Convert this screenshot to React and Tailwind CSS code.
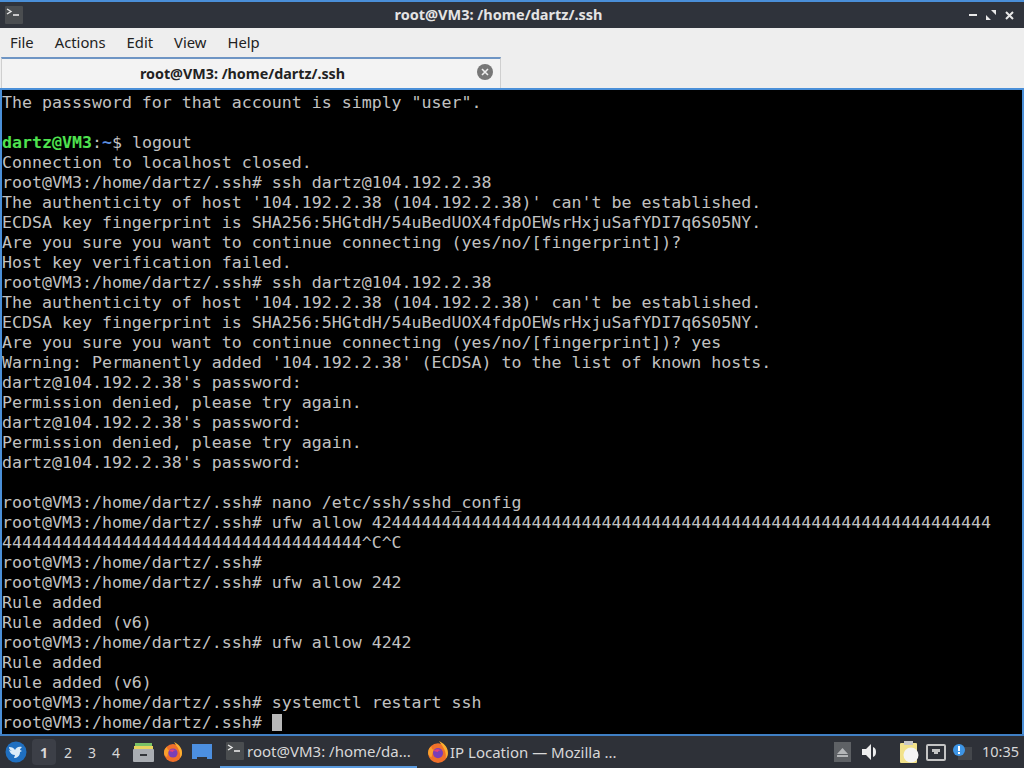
const lines = [
  'The passsword for that account is simply "user".',
  '',
  'PROMPT',
  'Connection to localhost closed.',
  'root@VM3:/home/dartz/.ssh# ssh dartz@104.192.2.38',
  "The authenticity of host '104.192.2.38 (104.192.2.38)' can't be established.",
  'ECDSA key fingerprint is SHA256:5HGtdH/54uBedUOX4fdpOEWsrHxjuSafYDI7q6S05NY.',
  'Are you sure you want to continue connecting (yes/no/[fingerprint])?',
  'Host key verification failed.',
  'root@VM3:/home/dartz/.ssh# ssh dartz@104.192.2.38',
  "The authenticity of host '104.192.2.38 (104.192.2.38)' can't be established.",
  'ECDSA key fingerprint is SHA256:5HGtdH/54uBedUOX4fdpOEWsrHxjuSafYDI7q6S05NY.',
  'Are you sure you want to continue connecting (yes/no/[fingerprint])? yes',
  "Warning: Permanently added '104.192.2.38' (ECDSA) to the list of known hosts.",
  "dartz@104.192.2.38's password:",
  'Permission denied, please try again.',
  "dartz@104.192.2.38's password:",
  'Permission denied, please try again.',
  "dartz@104.192.2.38's password:",
  '',
  'root@VM3:/home/dartz/.ssh# nano /etc/ssh/sshd_config',
  'root@VM3:/home/dartz/.ssh# ufw allow 42444444444444444444444444444444444444444444444444444444444444',
  '444444444444444444444444444444444444^C^C',
  'root@VM3:/home/dartz/.ssh#',
  'root@VM3:/home/dartz/.ssh# ufw allow 242',
  'Rule added',
  'Rule added (v6)',
  'root@VM3:/home/dartz/.ssh# ufw allow 4242',
  'Rule added',
  'Rule added (v6)',
  'root@VM3:/home/dartz/.ssh# systemctl restart ssh',
]

function TermIcon({ size = 18 }) {
  return (
    <svg width={size} height={size} viewBox="0 0 18 18">
      <rect width="18" height="18" rx="1" fill="#4a4d50" />
      <path d="M2 3l4 2.5L2 8" fill="none" stroke="#e8e8e8" strokeWidth="1.4" />
      <path d="M8 9h6" stroke="#e8e8e8" strokeWidth="1.6" />
    </svg>
  )
}

function Firefox({ size = 20 }) {
  return (
    <svg width={size} height={size} viewBox="0 0 20 20">
      <circle cx="10" cy="11" r="9" fill="#f0702a" />
      <path d="M11 0c4 2 8 5 8 11 0 2-1 4-2 5 1-6-2-10-6-16z" fill="#fbb030" />
      <path d="M1 11c0-3 1-5 3-6 0 2 1 3 2 3l-2 7c-2-1-3-2-3-4z" fill="#f9a02c" />
      <circle cx="10" cy="11" r="4.6" fill="#7a3fb8" />
      <path d="M6 9c2-2 5-2 7 0-2-1-3 0-3 1l-4-1z" fill="#e4417a" />
    </svg>
  )
}

function Logo() {
  return (
    <svg width="22" height="22" viewBox="0 0 22 22">
      <circle cx="11" cy="11" r="10.5" fill="#1f6fc0" />
      <path d="M4 6c3 0 5 1 6 3 1-2 3-4 7-3-1 1-2 2-2 3l2 1-2 1c0 4-3 6-6 6l1-3c-3 0-5-2-6-5l3 1C5 9 4 8 4 6z" fill="#dcecf8" />
    </svg>
  )
}

export default function App() {
  return (
    <div className="w-[1024px] h-[768px] overflow-hidden flex flex-col bg-[#2f343f] font-['Noto_Sans',sans-serif]">
      <div className="h-[2px] bg-[#4a8fd8]" />
      <div className="h-[26px] shrink-0 flex items-center px-[5px] bg-[#2f333b]">
        <TermIcon />
        <div className="flex-1 text-center font-bold text-[#e4e4e4] text-[14.5px] leading-none pl-[5px] pb-[2px]">root@VM3: /home/dartz/.ssh</div>
        <div className="flex items-center gap-[9px] mr-[5px]">
          <svg width="8" height="8" viewBox="0 0 8 8"><rect y="3" width="8" height="2" fill="#e8e8e8" /></svg>
          <svg width="10" height="10" viewBox="0 0 10 10"><path d="M5 0h5v5zM0 5l5 5H0z" fill="#e8e8e8" /></svg>
          <svg width="9" height="9" viewBox="0 0 9 9"><path d="M1 1l7 7M8 1L1 8" stroke="#e8e8e8" strokeWidth="2" /></svg>
        </div>
      </div>
      <div className="h-[30px] shrink-0 bg-[#eeeeee] flex items-center pl-[10px] gap-[21px] text-[14.8px] text-[#222] pb-[2px]">
        <span>File</span><span>Actions</span><span>Edit</span><span>View</span><span>Help</span>
      </div>
      <div className="h-[32px] shrink-0 bg-[#eeeeee] flex items-end border-b-2 border-[#4a8fd8]">
        <div className="ml-[1px] w-[500px] h-[31px] bg-[#f3f3f3] border-t-2 border-x border-[#6e95c4] border-x-[#cfcfcf] flex items-center relative">
          <div className="flex-1 text-center font-bold text-[14.3px] text-[#222] pr-[17px]">root@VM3: /home/dartz/.ssh</div>
          <svg className="absolute right-[7px] top-[5px]" width="16" height="16" viewBox="0 0 16 16">
            <circle cx="8" cy="8" r="8" fill="#777" />
            <path d="M5 5l6 6M11 5l-6 6" stroke="#eee" strokeWidth="1.6" />
          </svg>
        </div>
      </div>
      <div className="flex-1 bg-black border-x-2 border-[#4a8fd8] text-[#c2c2c2] font-['DejaVu_Sans_Mono',monospace] text-[16.6px] leading-[20px] whitespace-pre pt-[3px] overflow-hidden">
        {lines.map((l, i) => (
          <div key={i} className="h-[20px]">
            {l === 'PROMPT' ? (
              <><span className="font-bold text-[#4fe34f]">dartz@VM3</span>:<span className="font-bold text-[#5c8fe0]">~</span>$ logout</>
            ) : l}
          </div>
        ))}
        <div className="h-[20px] flex">
          <span>root@VM3:/home/dartz/.ssh# </span>
          <span className="w-[10px] h-[17px] mt-[1px] bg-[#b8b8b8]" />
        </div>
      </div>
      <div className="h-[2px] shrink-0 bg-[#3f7fc4]" />
      <div className="h-[32px] shrink-0 bg-[#2e3138] flex items-center text-[#d8d8d8] text-[15px] pl-[5px] pr-[5px]">
        <Logo />
        <div className="flex items-center ml-[5px] w-[101px]">
          <span className="w-[24px] h-[26px] flex items-center justify-center font-bold text-[14px] bg-[#3c3f47] rounded-sm">1</span>
          <span className="w-[24px] text-center text-[14px]">2</span>
          <span className="w-[24px] text-center text-[14px]">3</span>
          <span className="w-[24px] text-center text-[14px]">4</span>
        </div>
        <svg width="21" height="21" viewBox="0 0 21 21">
          <rect x="2" y="1" width="17" height="4" fill="#79c267" />
          <rect x="1" y="4" width="19" height="3" fill="#e8d45e" />
          <rect y="7" width="21" height="13" rx="1" fill="#a9adb2" />
          <rect x="7" y="12" width="7" height="2" fill="#33363b" />
        </svg>
        <div className="ml-[9px]"><Firefox /></div>
        <svg className="ml-[9px]" width="20" height="18" viewBox="0 0 20 18">
          <path d="M0 1h20v15h-5v-2H5v2H0z" fill="#4c8fe0" />
        </svg>
        <div className="ml-[8px] w-[197px] h-full flex items-center gap-[3px] pl-[6px] border-b-2 border-[#5a9ade]">
          <TermIcon />
          <span>root@VM3: /home/da...</span>
        </div>
        <div className="ml-[10px] flex items-center gap-[1px]">
          <Firefox size={22} />
          <span>IP Location — Mozilla ...</span>
        </div>
        <div className="flex-1" />
        <div className="w-[17px] h-[20px] bg-[#5e6165] flex items-center justify-center">
          <svg width="11" height="9" viewBox="0 0 11 9"><path d="M5.5 0L11 6H0z" fill="#b4b6b8" /><rect y="7" width="11" height="2" fill="#b4b6b8" /></svg>
        </div>
        <svg className="ml-[11px]" width="18" height="16" viewBox="0 0 18 16">
          <path d="M0 5h4l5-5v16l-5-5H0z" fill="#eee" />
          <path d="M11 3c4 1 4 9 0 10z" fill="#eee" />
        </svg>
        <svg className="ml-[19px]" width="20" height="24" viewBox="0 0 20 24">
          <rect x="1" y="3" width="17" height="20" rx="1" fill="#f2e28a" />
          <rect x="5" y="1" width="9" height="4" fill="#c8c8c8" />
          <circle cx="12" cy="15" r="7.5" fill="#f4f4f4" />
        </svg>
        <svg className="ml-[7px]" width="20" height="17" viewBox="0 0 20 17">
          <rect x="1" y="1" width="18" height="15" rx="1" fill="#2e3138" stroke="#c4c4c4" strokeWidth="2" />
          <path d="M6 5h8v3h-8zM8 8h4v2H8z" fill="#c4c4c4" />
        </svg>
        <svg className="ml-[6px]" width="20" height="18" viewBox="0 0 20 18">
          <rect x="6" y="4" width="14" height="13" fill="#44474c" />
          <circle cx="7" cy="7" r="6" fill="#3d95e6" />
          <rect x="6" y="3" width="2" height="5" fill="#fff" />
          <rect x="6" y="9" width="2" height="2" fill="#fff" />
        </svg>
        <span className="ml-[10px] text-[14.5px]">10:35</span>
      </div>
    </div>
  )
}
